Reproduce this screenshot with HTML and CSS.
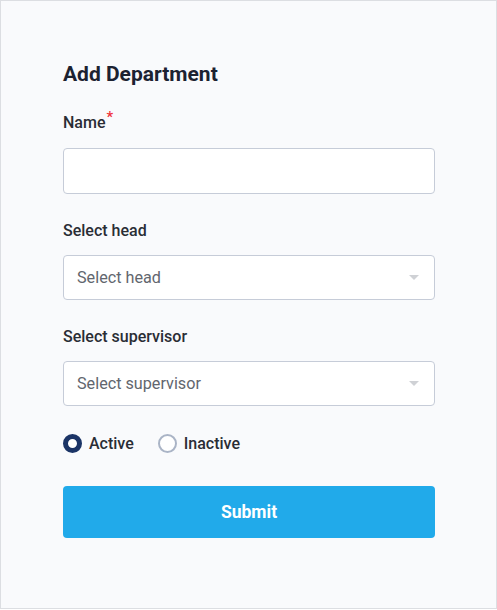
FILE: index.html
```html
<!DOCTYPE html>
<html>
<head>
<meta charset="utf-8">
<link rel="stylesheet" href="styles.css">
</head>
<body>
<div class="panel">
  <h1 class="title">Add Department</h1>
  <div class="field">
    <label class="label">Name<span class="req">*</span></label>
    <div class="input"></div>
  </div>
  <div class="field">
    <label class="label">Select head</label>
    <div class="select"><span class="placeholder">Select head</span><span class="caret"></span></div>
  </div>
  <div class="field">
    <label class="label">Select supervisor</label>
    <div class="select"><span class="placeholder">Select supervisor</span><span class="caret"></span></div>
  </div>
  <div class="radios">
    <span class="radio"><span class="dot on"></span>Active</span>
    <span class="radio"><span class="dot"></span>Inactive</span>
  </div>
  <button class="submit">Submit</button>
</div>
</body>
</html>
```
FILE: styles.css
```css
* { box-sizing: border-box; }
body { margin: 0; font-family: Roboto, "Liberation Sans", sans-serif; }
.panel {
  width: 497px;
  height: 609px;
  border: 1px solid #dcdee2;
  background: #f9fafc;
  padding: 61px 61px 0 62px;
  display: flex;
  flex-direction: column;
}
.title {
  margin: 0;
  font-size: 21px;
  line-height: 24px;
  font-weight: 700;
  color: #1c2231;
}
.field { display: flex; flex-direction: column; margin-top: 27px; }
.label {
  font-size: 16px;
  line-height: 20px;
  font-weight: 500;
  color: #2a2d35;
  position: relative;
}
.req { color: #f0303a; font-size: 15px; position: relative; top: -6px; margin-left: 1px; }
.input {
  margin-top: 15px;
  height: 46px;
  background: #fff;
  border: 1px solid #c6ccd8;
  border-radius: 4px;
}
.select {
  margin-top: 14px;
  height: 45px;
  background: #fff;
  border: 1px solid #c6ccd8;
  border-radius: 4px;
  display: flex;
  align-items: center;
  justify-content: space-between;
  padding: 0 15px 0 13px;
}
.placeholder { font-size: 16.2px; color: #62666e; }
.caret {
  width: 0; height: 0;
  border-left: 5px solid transparent;
  border-right: 5px solid transparent;
  border-top: 5px solid #cfd1d5;
}
.radios {
  margin-top: 27px;
  display: flex;
  gap: 24px;
  height: 20px;
  align-items: center;
}
.radio {
  display: flex;
  align-items: center;
  gap: 7px;
  font-size: 16px;
  font-weight: 500;
  color: #2a2d35;
}
.dot {
  width: 19px; height: 19px;
  border-radius: 50%;
  border: 2px solid #aab4c6;
  background: #fff;
}
.dot.on { border: 5.5px solid #1b3466; }
.submit {
  margin-top: 33px;
  height: 52px;
  border: none;
  border-radius: 4px;
  background: #21aaea;
  color: #fff;
  font-family: Roboto, "Liberation Sans", sans-serif;
  font-size: 17.5px;
  font-weight: 700;
}
```
